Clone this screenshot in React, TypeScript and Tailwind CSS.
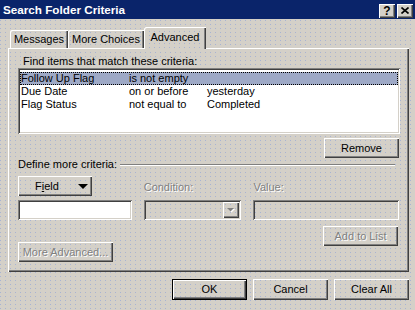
import React from 'react'

const raised = 'shadow-[inset_1px_1px_#ffffff,inset_-1px_-1px_#404040,inset_-2px_-2px_#808080]'
const sunken = 'shadow-[inset_1px_1px_#808080,inset_-1px_-1px_#ffffff,inset_2px_2px_#404040,inset_-2px_-2px_#d4d0c8]'
const dimText = 'text-[#808080] [text-shadow:1px_1px_0_#ffffff]'
const dots = 'bg-[#d4d0c8] bg-[radial-gradient(circle_at_0.5px_0.5px,#a7b3d3_0.5px,transparent_0.7px)] bg-[length:5px_4px]'

const Button = ({ label, width, disabled, isDefault }: { label: string; width: string; disabled?: boolean; isDefault?: boolean }) => (
  <div
    className={`${width} h-[21px] flex items-center justify-center ${
      isDefault
        ? 'border border-black shadow-[inset_1px_1px_#ffffff,inset_-1px_-1px_#404040,inset_-2px_-2px_#808080]'
        : raised
    } ${disabled ? dimText : 'text-black'}`}
  >
    {label}
  </div>
)

const rows = [
  { field: 'Follow Up Flag', cond: 'is not empty', value: '' },
  { field: 'Due Date', cond: 'on or before', value: 'yesterday' },
  { field: 'Flag Status', cond: 'not equal to', value: 'Completed' },
]

export default function App() {
  return (
    <div className={`w-[415px] h-[310px] overflow-hidden flex flex-col ${dots} font-['Liberation_Sans',Arial,sans-serif] text-[11px] leading-[13px] text-black`}>
      {/* title bar */}
      <div className="h-[19px] shrink-0 bg-[#0a246a] flex items-start pl-[3px] pr-[2px]">
        <div className="flex-1 text-white font-bold text-[11.7px] leading-[19px]">Search Folder Criteria</div>
        <div className="flex gap-[2px] pt-[4px]">
          <div className={`w-[16px] h-[14px] bg-[#d4d0c8] ${raised} flex items-center justify-center font-bold text-[12px] leading-[12px] pb-[1px]`}>
            ?
          </div>
          <div className={`w-[16px] h-[14px] bg-[#d4d0c8] ${raised} flex items-center justify-center pb-[1px]`}>
            <svg width="8" height="7" viewBox="0 0 8 7">
              <path d="M0.5 0.5 L7.5 6.5 M7.5 0.5 L0.5 6.5" stroke="#000" strokeWidth="1.6" />
            </svg>
          </div>
        </div>
      </div>

      <div className="pl-[8px] pt-[8px]">
        {/* tabs */}
        <div className="h-[21px] flex items-end pl-[2px]">
          <div className="w-[58px] h-[18px] flex items-center justify-center rounded-tl-[2px] shadow-[inset_1px_1px_#ffffff,inset_-1px_0_#404040,inset_-2px_0_#808080]">
            Messages
          </div>
          <div className="w-[76px] h-[18px] flex items-center justify-center rounded-tl-[2px] shadow-[inset_1px_1px_#ffffff,inset_-1px_0_#404040,inset_-2px_0_#808080]">
            More Choices
          </div>
          <div className={`relative top-[1px] z-10 w-[62px] h-[22px] flex items-start justify-center pt-[4px] rounded-tl-[2px] ${dots} shadow-[inset_1px_1px_#ffffff,inset_-1px_0_#404040,inset_-2px_0_#808080]`}>
            Advanced
          </div>
        </div>

        {/* panel */}
        <div className={`w-[401px] h-[224px] flex flex-col px-[10px] ${raised}`}>
          <div className="mt-[7px] ml-[5px] h-[13px]">Find items that match these criteria:</div>
          <div className={`w-[382px] h-[66px] bg-white ${sunken} pt-[4px] px-[2px]`}>
            {rows.map((r, i) => (
              <div
                key={r.field}
                className={`h-[13px] flex pl-[1px] ${i === 0 ? 'bg-[#9ea9c6] outline-1 outline-dotted outline-black -outline-offset-1' : ''}`}
              >
                <span className="w-[108px]">{r.field}</span>
                <span className="w-[78px]">{r.cond}</span>
                <span>{r.value}</span>
              </div>
            ))}
          </div>
          <div className="self-end mt-[4px]">
            <div className={`w-[75px] h-[20px] flex items-center justify-center ${raised}`}>Remove</div>
          </div>

          <div className="h-[13px] flex items-center">
            <span>Define more criteria:</span>
            <div className="flex-1 ml-[3px] mr-[4px] h-[2px] border-t border-t-[#808080] border-b border-b-white" />
          </div>

          <div className="mt-[5px] flex">
            {/* field column */}
            <div className="w-[114px] flex flex-col">
              <div className={`w-[74px] h-[20px] flex items-center ${raised}`}>
                <span className="ml-[17px]">
                  F<span className="underline">i</span>eld
                </span>
                <svg className="ml-[19px]" width="10" height="5" viewBox="0 0 10 5">
                  <polygon points="0,0 10,0 5,5" fill="#000" />
                </svg>
              </div>
              <div className={`mt-[4px] h-[20px] bg-white ${sunken}`} />
              <div className={`mt-[22px] w-[95px] h-[20px] flex items-center justify-center ${raised} ${dimText}`}>
                More Advanced...
              </div>
            </div>

            {/* condition column */}
            <div className="ml-[12px] w-[98px] flex flex-col">
              <div className={`mt-[5px] h-[13px] ${dimText}`}>Condition:</div>
              <div className={`mt-[6px] h-[20px] ${sunken} flex justify-end items-start pt-[2px] pr-[2px]`}>
                <div className={`w-[16px] h-[16px] ${raised} flex items-center justify-center`}>
                  <svg width="8" height="5" viewBox="0 0 8 5">
                    <polygon points="1,1 8,1 4.5,4.5" fill="#ffffff" />
                    <polygon points="0,0 7,0 3.5,3.5" fill="#808080" />
                  </svg>
                </div>
              </div>
            </div>

            {/* value column */}
            <div className="ml-[12px] w-[146px] flex flex-col">
              <div className={`mt-[5px] h-[13px] ${dimText}`}>Value:</div>
              <div className={`mt-[6px] h-[20px] ${sunken}`} />
              <div className={`self-end mt-[6px] mr-[1px] w-[75px] h-[20px] flex items-center justify-center ${raised} ${dimText}`}>
                Add to List
              </div>
            </div>
          </div>
        </div>
      </div>

      {/* dialog buttons */}
      <div className="mt-[7px] flex justify-end gap-[6px] pr-[6px]">
        <Button label="OK" width="w-[75px]" isDefault />
        <Button label="Cancel" width="w-[75px]" />
        <Button label="Clear All" width="w-[75px]" />
      </div>
    </div>
  )
}
